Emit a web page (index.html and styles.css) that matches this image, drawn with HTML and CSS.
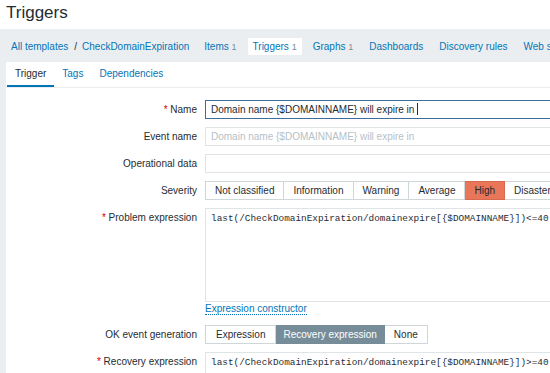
FILE: index.html
```html
<!DOCTYPE html>
<html lang="en">
<head>
  <meta charset="UTF-8">
  <meta name="viewport" content="width=device-width, initial-scale=1.0">
  <title>Triggers</title>
  <link rel="stylesheet" href="styles.css">
</head>
<body>
  <header class="header">
    <h1>Triggers</h1>
  </header>

  <nav class="nav">
    <a href="#" class="nav-link">All templates</a>
    <span class="nav-sep">/</span>
    <a href="#" class="nav-link">CheckDomainExpiration</a>
    <a href="#" class="nav-link nav-item first">Items <sup>1</sup></a>
    <a href="#" class="nav-link nav-item selected">Triggers <sup>1</sup></a>
    <a href="#" class="nav-link nav-item">Graphs <sup>1</sup></a>
    <a href="#" class="nav-link nav-item">Dashboards</a>
    <a href="#" class="nav-link nav-item">Discovery rules</a>
    <a href="#" class="nav-link nav-item">Web scenarios</a>
  </nav>

  <div class="page">
    <div class="panel">
      <ul class="tabs">
        <li class="tab active">Trigger</li>
        <li class="tab">Tags</li>
        <li class="tab">Dependencies</li>
      </ul>

      <form class="form">
        <label class="label"><span class="req">*</span> Name</label>
        <div class="field">
          <div class="input focused">Domain name {$DOMAINNAME} will expire in <span class="caret"></span></div>
        </div>

        <label class="label">Event name</label>
        <div class="field">
          <input class="input" type="text" placeholder="Domain name {$DOMAINNAME} will expire in">
        </div>

        <label class="label">Operational data</label>
        <div class="field">
          <input class="input" type="text">
        </div>

        <label class="label">Severity</label>
        <div class="field">
          <div class="segmented">
            <span class="seg">Not classified</span>
            <span class="seg">Information</span>
            <span class="seg">Warning</span>
            <span class="seg">Average</span>
            <span class="seg sev-high">High</span>
            <span class="seg">Disaster</span>
          </div>
        </div>

        <label class="label top"><span class="req">*</span> Problem expression</label>
        <div class="field">
          <textarea class="expr" readonly>last(/CheckDomainExpiration/domainexpire[{$DOMAINNAME}])&lt;=40</textarea>
          <div class="constructor"><a href="#">Expression constructor</a></div>
        </div>

        <label class="label">OK event generation</label>
        <div class="field">
          <div class="segmented">
            <span class="seg wide">Expression</span>
            <span class="seg seg-on narrow">Recovery expression</span>
            <span class="seg">None</span>
          </div>
        </div>

        <label class="label top"><span class="req">*</span> Recovery expression</label>
        <div class="field">
          <textarea class="expr" readonly>last(/CheckDomainExpiration/domainexpire[{$DOMAINNAME}])&gt;=40</textarea>
        </div>
      </form>
    </div>
  </div>
</body>
</html>
```

FILE: styles.css
```css
body {
  margin: 0;
  font-family: "Liberation Sans", Arial, sans-serif;
  font-size: 10px;
  color: #1f2c33;
  background-color: #ffffff;
  overflow: hidden;
  width: 550px;
  height: 373px;
}
a {
  color: #0275b8;
  text-decoration: none;
}
.header {
  height: 29px;
  padding-left: 6px;
}
.header h1 {
  margin: 0;
  font-size: 17px;
  font-weight: normal;
  line-height: 25px;
}
.nav {
  display: flex;
  align-items: center;
  height: 33px;
  padding-left: 11px;
  padding-top: 1px;
  box-sizing: border-box;
  background-color: #ebeef0;
  white-space: nowrap;
}
.nav-sep {
  margin: 0 5px 0 6px;
  color: #1f2c33;
}
.nav-item {
  margin-left: 6px;
  padding: 3px 5px;
}
.nav-item.first {
  margin-left: 10px;
}
.nav-item.selected {
  background: #ffffff;
}
.nav-item sup {
  vertical-align: baseline;
  font-size: 9px;
  color: #768d99;
}
.page {
  background-color: #ebeef0;
  padding-left: 6px;
}
.panel {
  background: #ffffff;
  height: 320px;
}
.tabs {
  display: flex;
  list-style: none;
  margin: 0;
  padding: 0 0 0 1px;
  height: 25px;
  border-bottom: 1px solid #ebeef0;
}
.tab {
  padding: 0 8px;
  line-height: 23px;
  color: #0275b8;
  border-bottom: 2px solid transparent;
}
.tab.active {
  color: #1f2c33;
  border-bottom-color: #0275b8;
}
.form {
  display: grid;
  grid-template-columns: 191px 460px;
  column-gap: 8px;
  row-gap: 8px;
  padding-top: 12px;
}
.label {
  text-align: right;
  line-height: 19px;
  white-space: nowrap;
}
.req {
  color: #d40000;
}
.input {
  box-sizing: border-box;
  display: block;
  width: 460px;
  height: 19px;
  margin: 0;
  padding: 0 5px;
  border: 1px solid #dfe4e7;
  font-family: inherit;
  font-size: 10px;
  line-height: 17px;
  color: #1f2c33;
  background: #ffffff;
  outline: none;
  white-space: nowrap;
}
.input::placeholder {
  color: #b5c1c7;
}
.input.focused {
  border-color: #3e6d98;
}
.caret {
  display: inline-block;
  width: 1px;
  height: 12px;
  background: #1f2c33;
  vertical-align: -2px;
}
.segmented {
  display: flex;
  height: 19px;
}
.seg {
  box-sizing: border-box;
  height: 19px;
  padding: 0 9px;
  line-height: 17px;
  border: 1px solid #cfd6da;
  border-left: none;
  background: #ffffff;
  white-space: nowrap;
}
.seg:first-child {
  border-left: 1px solid #cfd6da;
}
.seg.wide {
  padding: 0 10px;
}
.seg.narrow {
  padding: 0 7px;
}
.sev-high {
  background: #e97659;
  border-color: #d8694e;
}
.seg-on {
  background: #768d99;
  border-color: #768d99;
  color: #ffffff;
}
.expr {
  box-sizing: border-box;
  display: block;
  width: 460px;
  height: 94px;
  margin: 0;
  padding: 3px 5px;
  border: 1px solid #dfe4e7;
  font-family: "Liberation Mono", "Courier New", monospace;
  font-size: 9.4px;
  line-height: 13px;
  color: #1f2c33;
  resize: none;
  outline: none;
  overflow: hidden;
}
.constructor {
  height: 15px;
  line-height: 14px;
}
.constructor a {
  border-bottom: 1px dotted #0275b8;
}
```
